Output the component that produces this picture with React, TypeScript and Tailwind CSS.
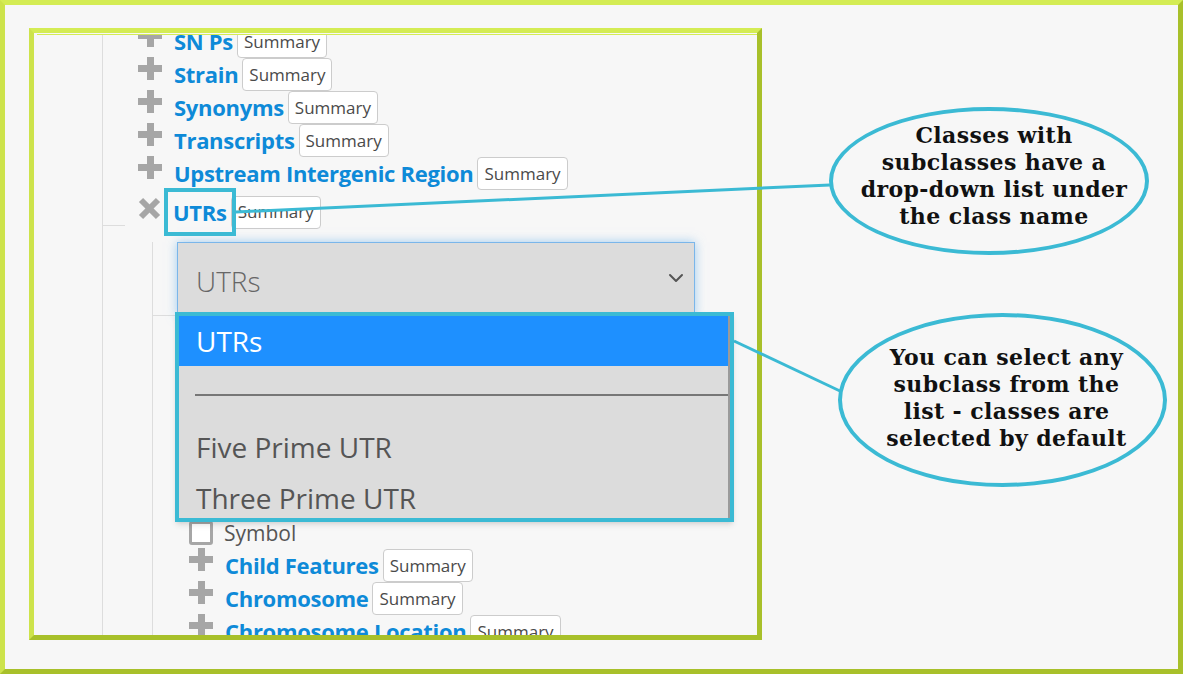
import { ChevronDown } from "lucide-react";

const PlusIcon = () => (
  <svg width="24" height="23" viewBox="0 0 24 23" className="shrink-0 -translate-y-[6px]">
    <rect x="0" y="8" width="24" height="7" fill="#a6a6a6" />
    <rect x="9" y="0" width="7" height="23" fill="#a6a6a6" />
  </svg>
);

const XIcon = () => (
  <svg width="23" height="23" viewBox="0 0 23 23" className="shrink-0 -translate-y-[4px]">
    <line x1="3" y1="3" x2="20" y2="20" stroke="#a6a6a6" strokeWidth="6" />
    <line x1="20" y1="3" x2="3" y2="20" stroke="#a6a6a6" strokeWidth="6" />
  </svg>
);

const Summary = () => (
  <span className="ml-1 h-[33px] px-[6px] border border-[#cccccc] rounded-[4px] bg-white text-[17px] text-[#4a4a4a] flex items-center shrink-0">
    Summary
  </span>
);

const Row = ({ label }: { label: string }) => (
  <div className="h-[33px] flex items-center">
    <PlusIcon />
    <span className="ml-3 font-bold text-[22px] leading-none text-[#0e8ad8] whitespace-nowrap tracking-[-0.3px] -translate-y-px">{label}</span>
    <Summary />
  </div>
);

export default function App() {
  return (
    <div
      className="relative w-[1183px] h-[674px] bg-[#f7f7f7] border-[5px] border-t-[#d4ec54] border-l-[#cde34b] border-b-[#a8c02a] border-r-[#a8c02a] overflow-hidden"
      style={{ fontFamily: '"Open Sans", "Noto Sans", sans-serif' }}
    >
      {/* inner screenshot frame */}
      <div className="ml-[24px] mt-[23px] w-[733px] h-[612px] border-[5px] border-t-[#d4ec54] border-l-[#cde34b] border-b-[#a8c02a] border-r-[#a8c02a] flex flex-col">
        <div className="ml-[3px] mt-px h-px bg-[#d4ec54] shrink-0" />
        <div className="flex-1 overflow-hidden">
          <div className="ml-[68px] h-[calc(100%+10px)] -mt-[10px] border-l border-[#dddddd] pl-[35px]">
            <Row label="SN Ps" />
            <Row label="Strain" />
            <Row label="Synonyms" />
            <Row label="Transcripts" />
            <Row label="Upstream Intergenic Region" />
            <div className="h-[44px] flex items-center">
              <XIcon />
              <span className="relative ml-3 font-bold text-[22px] leading-none text-[#0e8ad8] tracking-[-0.3px]">
                UTRs
                <span className="absolute -left-[9px] -right-[9px] -top-[13px] -bottom-[13px] border-4 border-[#3bbad4] z-10" />
              </span>
              <Summary />
            </div>
            <div className="-ml-[35px] -mt-[9px] w-[22px] h-px bg-[#dddddd]" />
            <div className="mt-[16px] ml-[14px] border-l border-[#dddddd] pl-[24px] h-[500px]">
              <div className="relative w-[518px]">
                <div className="h-[74px] bg-[#dcdcdc] border border-[#7ab6ea] shadow-[0_0_10px_rgba(102,175,233,0.6)] flex items-center justify-between pl-[18px] pr-[6px]">
                  <span className="text-[28px] font-light text-[#666] translate-y-[2px]">UTRs</span>
                  <ChevronDown size={24} color="#555" strokeWidth={2} className="-translate-y-[1px]" />
                </div>
                <div className="absolute left-[-2px] top-[70px] w-[559px] h-[210px] border-4 border-[#3bbad4] bg-[#dcdcdc] shadow-md z-20 overflow-hidden">
                  <div className="h-full border-r-2 border-[#9a9a9a] flex flex-col text-[28px] text-[#555]">
                    <div className="h-[50px] shrink-0 bg-[#1e90ff] text-white flex items-center pl-[17px]">UTRs</div>
                    <div className="h-[55px] shrink-0 pt-[28px] pl-[16px]">
                      <div className="h-[2px] bg-[#777]" />
                    </div>
                    <div className="h-[51px] shrink-0 flex items-center pl-[17px]">Five Prime UTR</div>
                    <div className="h-[51px] shrink-0 flex items-center pl-[17px]">Three Prime UTR</div>
                  </div>
                </div>
              </div>
              <div className="-ml-[24px] -mt-px w-[24px] h-px bg-[#dddddd]" />
              <div className="mt-[200px] pl-[12px]">
                <div className="h-[33px] flex items-center">
                  <span className="w-[24px] h-[24px] border-[3px] border-[#a6a6a6] rounded-[3px] bg-white shrink-0" />
                  <span className="ml-[11px] text-[21px] text-[#555] translate-y-[1px]">Symbol</span>
                </div>
                <Row label="Child Features" />
                <Row label="Chromosome" />
                <Row label="Chromosome Location" />
              </div>
            </div>
          </div>
        </div>
      </div>

      {/* annotation layer */}
      <div className="absolute -left-[5px] -top-[5px] w-[1183px] h-[674px] pointer-events-none">
        <svg width="1183" height="674" className="absolute left-0 top-0">
          <line x1="236" y1="212" x2="830" y2="185" stroke="#3bbad4" strokeWidth="3" />
          <line x1="734" y1="341" x2="840" y2="391" stroke="#3bbad4" strokeWidth="3" />
        </svg>
        <div
          className="absolute left-[829px] top-[107px] w-[320px] h-[148px] rounded-[50%] border-4 border-[#3bbad4] bg-[#f7f7f7] flex items-center justify-center pb-[11px] pl-[10px] text-center text-[22px] leading-[27px] font-bold text-[#111] tracking-[0.4px]"
          style={{ fontFamily: '"DejaVu Serif", serif' }}
        >
          <div>
            Classes with
            <br />
            subclasses have a
            <br />
            drop-down list under
            <br />
            the class name
          </div>
        </div>
        <div
          className="absolute left-[838px] top-[313px] w-[329px] h-[174px] rounded-[50%] border-4 border-[#3bbad4] bg-[#f7f7f7] flex items-center justify-center pb-[5px] pl-[8px] text-center text-[22px] leading-[27px] font-bold text-[#111] tracking-[0.4px]"
          style={{ fontFamily: '"DejaVu Serif", serif' }}
        >
          <div>
            You can select any
            <br />
            subclass from the
            <br />
            list - classes are
            <br />
            selected by default
          </div>
        </div>
      </div>
    </div>
  );
}
